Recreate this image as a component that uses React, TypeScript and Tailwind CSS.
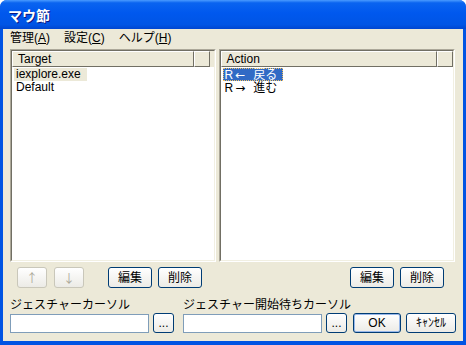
import React from 'react';

const font = { fontFamily: '"Liberation Sans", "Noto Sans CJK JP", sans-serif' };
const cjk = { fontFamily: '"Noto Sans CJK JP", sans-serif' };
const arrowFont = { fontFamily: '"DejaVu Sans", sans-serif' };

const Btn: React.FC<{ className?: string; disabled?: boolean; children: React.ReactNode }> = ({ className, disabled, children }) => (
  <div
    className={`flex items-center justify-center rounded-[3px] border bg-gradient-to-b from-white to-[#ECEBE6] text-[12px] leading-none ${disabled ? 'text-[#ACA899] border-[#C9C7BA]' : 'text-black border-[#003C74]'} ${className ?? ''}`}
  >
    {children}
  </div>
);

const Sunken: React.FC<{ className?: string; children?: React.ReactNode }> = ({ className, children }) => (
  <div className={`border border-t-[#ACA899] border-l-[#ACA899] border-r-white border-b-white ${className ?? ''}`}>
    <div className="w-full h-full border border-t-[#716F64] border-l-[#716F64] border-r-[#F1EFE2] border-b-[#F1EFE2] bg-white flex flex-col">
      {children}
    </div>
  </div>
);

const Header: React.FC<{ title: string; width: string }> = ({ title, width }) => (
  <div className="flex h-[16px] shrink-0 bg-[#ECE9D8] text-[12px] leading-none">
    <div className={`${width} flex items-center pl-[5px] border border-t-white border-l-white border-r-[#716F64] border-b-[#716F64]`}>{title}</div>
    <div className="w-[16px] border border-t-white border-l-white border-r-[#716F64] border-b-[#716F64]" />
    <div className="flex-1" />
  </div>
);

const MenuItem: React.FC<{ label: string; k: string }> = ({ label, k }) => (
  <span>
    {label}(<span className="underline">{k}</span>)
  </span>
);

const ActionRow: React.FC<{ arrow: string; label: string; selected?: boolean }> = ({ arrow, label, selected }) => (
  <div
    className={`ml-[2px] h-[13px] w-fit flex items-center gap-[2px] pl-[2px] pr-[6px] text-[12px] leading-[12px] ${selected ? 'bg-[#316AC5] text-white outline outline-1 outline-dotted outline-[#F0C060] -outline-offset-1' : ''}`}
  >
    <span>R</span>
    <span style={arrowFont}>{arrow}</span>
    <span className="ml-[6px]">{label}</span>
  </div>
);

export default function App() {
  return (
    <div style={font} className="w-[466px] h-[345px] flex flex-col bg-[#0054E3] rounded-t-[7px] overflow-hidden select-none">
      <div className="h-[29px] shrink-0 flex items-center pl-[8px] bg-[linear-gradient(to_bottom,#4A9BFF_0%,#0A64F0_10%,#0058EE_45%,#0055E5_85%,#0046D0_100%)]">
        <span style={cjk} className="text-white font-bold text-[14px] leading-none [text-shadow:1px_1px_0_#0A1883]">マウ節</span>
      </div>
      <div className="flex-1 mx-[3px] mb-[4px] bg-[#ECE9D8] flex flex-col text-[12px] text-black">
        <div className="h-[18px] shrink-0 flex items-center gap-[14px] pl-[7px] leading-none">
          <MenuItem label="管理" k="A" />
          <MenuItem label="設定" k="C" />
          <MenuItem label="ヘルプ" k="H" />
        </div>
        <div className="mt-[2px] h-[213px] flex gap-[3px] pl-[7px] pr-[8px]">
          <Sunken className="w-[206px] h-full">
            <Header title="Target" width="w-[182px]" />
            <div className="flex flex-col pt-[1px] leading-[13px]">
              <div className="ml-[2px] px-[2px] w-fit pr-[6px] bg-[#ECE9D8]">iexplore.exe</div>
              <div className="ml-[2px] px-[2px]">Default</div>
            </div>
          </Sunken>
          <Sunken className="w-[237px] h-full">
            <Header title="Action" width="w-[216px]" />
            <div className="flex flex-col pt-[1px]">
              <ActionRow arrow="←" label="戻る" selected />
              <ActionRow arrow="→" label="進む" />
            </div>
          </Sunken>
        </div>
        <div className="mt-[5px] h-[21px] shrink-0 flex">
          <Btn disabled className="ml-[14px] w-[30px]"><span style={cjk}>↑</span></Btn>
          <Btn disabled className="ml-[7px] w-[30px]"><span style={cjk}>↓</span></Btn>
          <Btn className="ml-[24px] w-[44px]">編集</Btn>
          <Btn className="ml-[6px] w-[44px]">削除</Btn>
          <Btn className="ml-auto w-[44px]">編集</Btn>
          <Btn className="ml-[6px] mr-[19px] w-[44px]">削除</Btn>
        </div>
        <div className="mt-[10px] h-[14px] shrink-0 flex items-center leading-none">
          <span className="ml-[7px] w-[173px]">ジェスチャーカーソル</span>
          <span>ジェスチャー開始待ちカーソル</span>
        </div>
        <div className="mt-[1px] h-[20px] shrink-0 flex items-end">
          <div className="ml-[7px] w-[139px] h-[19px] bg-white border border-[#7F9DB9]" />
          <Btn className="ml-[4px] w-[21px] h-[20px] text-[9px]">...</Btn>
          <div className="ml-[9px] w-[139px] h-[19px] bg-white border border-[#7F9DB9]" />
          <Btn className="ml-[4px] w-[21px] h-[20px] text-[9px]">...</Btn>
          <Btn className="ml-[6px] w-[48px] h-[20px] shadow-[inset_0_0_0_1px_#98B8EA]">OK</Btn>
          <Btn className="ml-[5px] w-[50px] h-[20px]">ｷｬﾝｾﾙ</Btn>
        </div>
      </div>
    </div>
  );
}
